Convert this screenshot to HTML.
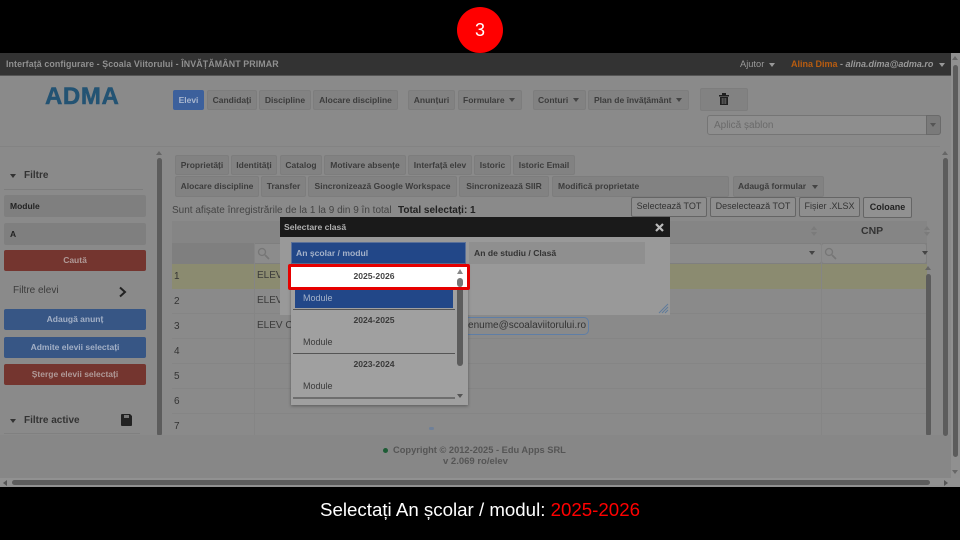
<!DOCTYPE html>
<html><head><meta charset="utf-8">
<style>
html,body{margin:0;padding:0;width:960px;height:540px;overflow:hidden;background:#000;font-family:"Liberation Sans",sans-serif}
div,span.a{position:absolute;box-sizing:border-box;white-space:nowrap}
.b{background:#828282;border-radius:2px;color:#3c3c3c;font-size:8.5px;font-weight:bold;text-align:center;border:1px solid #7d7d7d}
.t{color:#3a3a3a;font-size:10px}
.o{background:#8e8e8e;border:1px solid #656565;border-radius:2px;color:#333;font-size:9px;text-align:center;height:20px;line-height:17px}
.r{height:1px;background:#858585;left:172px;width:755px}
.n{left:174px;font-size:10px;color:#333;width:20px}
.caret{width:0;height:0;border-left:3.5px solid transparent;border-right:3.5px solid transparent;border-top:4px solid #444}
.s{background:#5c5c5c;border-radius:3px}
.side{left:4px;width:142px;border-radius:2px;text-align:center;font-size:8.5px;font-weight:bold;color:#b5b5b5;height:21px;line-height:21px}
.fi{left:4px;width:142px;height:22px;background:#7f7f7f;border-radius:2px;font-size:8.5px;font-weight:bold;color:#222;line-height:22px;padding-left:6px}
</style></head><body>
<div style="left:457px;top:7px;width:46px;height:46px;border-radius:50%;background:#f00;color:#fff;font-size:18px;line-height:46px;text-align:center">3</div>

<div style="left:0;top:53px;width:960px;height:434px;background:#8a8a8a"></div>
<div style="left:0;top:53px;width:951px;height:23px;background:#333;border-bottom:1px solid #555"></div>
<div style="left:6px;top:59px;font-size:8.85px;font-weight:bold;color:#909090;letter-spacing:.1px">Interfață configurare - Școala Viitorului - ÎNVĂȚĂMÂNT PRIMAR</div>
<div style="left:740px;top:59px;font-size:9.3px;color:#999">Ajutor</div>
<div class="caret" style="left:769px;top:63px;border-top-color:#999"></div>
<div style="left:791px;top:59px;font-size:9px;color:#999"><b style="color:#b85c10">Alina Dima</b> <b>-</b> <b><i>alina.dima@adma.ro</i></b></div>
<div class="caret" style="left:939px;top:63px;border-top-color:#999"></div>

<div style="left:45px;top:83px;font-size:24px;font-weight:bold;color:#235373;letter-spacing:.6px;-webkit-text-stroke:.5px #235373">ADMA</div>

<div class="b" style="left:173px;top:90px;width:31px;height:20px;line-height:18px;background:#3c609c;color:#a9b7cf;border-color:#3c609c">Elevi</div>
<div class="b" style="left:207px;top:90px;width:50px;height:20px;line-height:18px">Candidați</div>
<div class="b" style="left:259px;top:90px;width:52px;height:20px;line-height:18px">Discipline</div>
<div class="b" style="left:313px;top:90px;width:85px;height:20px;line-height:18px">Alocare discipline</div>
<div class="b" style="left:408px;top:90px;width:47px;height:20px;line-height:18px">Anunțuri</div>
<div class="b" style="left:458px;top:90px;width:64px;height:20px;line-height:18px;text-align:left;padding-left:4px">Formulare</div>
<div class="caret" style="left:509px;top:98px"></div>
<div class="b" style="left:533px;top:90px;width:53px;height:20px;line-height:18px;text-align:left;padding-left:4px">Conturi</div>
<div class="caret" style="left:573px;top:98px"></div>
<div class="b" style="left:588px;top:90px;width:101px;height:20px;line-height:18px;text-align:left;padding-left:5px">Plan de învățământ</div>
<div class="caret" style="left:676px;top:98px"></div>
<div class="b" style="left:700px;top:88px;width:48px;height:23px"></div>
<svg style="position:absolute;left:719px;top:93px" width="10" height="12" viewBox="0 0 10 12"><path d="M0 2h10v1.5H0zM3 0h4v2H3zM1 4h8v8H1z" fill="#1f1f1f"/><path d="M3.2 5v6M5 5v6M6.8 5v6" stroke="#777" stroke-width=".8"/></svg>

<div style="left:707px;top:115px;width:234px;height:20px;background:#8e8e8e;border:1px solid #757575;border-radius:3px;font-size:10px;color:#6a6a6a;line-height:19px;padding-left:6px">Aplică șablon</div>
<div style="left:926px;top:115px;width:15px;height:20px;background:#7a7a7a;border:1px solid #6a6a6a;border-radius:0 3px 3px 0"></div>
<div class="caret" style="left:930px;top:123px;border-top-color:#555"></div>

<div style="left:0;top:146px;width:940px;height:1px;background:#838383"></div>

<!-- Sidebar -->
<div class="caret" style="left:10px;top:174px;border-top-color:#333"></div>
<div style="left:24px;top:170px;font-size:10px;font-weight:bold;color:#333">Filtre</div>
<div style="left:4px;top:189px;width:139px;height:1px;background:#7d7d7d"></div>
<div class="fi" style="top:195px">Module</div>
<div class="fi" style="top:223px">A</div>
<div class="side" style="top:250px;background:#74352f;color:#b09a98">Caută</div>
<div style="left:13px;top:285px;font-size:10px;color:#3c3c3c">Filtre elevi</div>
<svg style="position:absolute;left:118px;top:286px" width="9" height="12" viewBox="0 0 9 12"><path d="M2 1.5l5 4.5-5 4.5" fill="none" stroke="#222" stroke-width="2"/></svg>
<div class="side" style="top:309px;background:#375685;color:#a3b0c6">Adaugă anunț</div>
<div class="side" style="top:337px;background:#375685;color:#a3b0c6">Admite elevii selectați</div>
<div class="side" style="top:364px;background:#74352f;color:#b09a98">Șterge elevii selectați</div>
<div class="caret" style="left:10px;top:419px;border-top-color:#333"></div>
<div style="left:24px;top:415px;font-size:10px;font-weight:bold;color:#333">Filtre active</div>
<svg style="position:absolute;left:121px;top:414px" width="12" height="12" viewBox="0 0 12 12"><path d="M1 0h8l2 2v9a1 1 0 0 1-1 1H1a1 1 0 0 1-1-1V1a1 1 0 0 1 1-1z" fill="#222"/><path d="M3 1h5v3H3z" fill="#777"/></svg>
<div style="left:4px;top:433px;width:136px;height:1px;background:#808080"></div>

<!-- Left scrollbar -->
<div class="caret" style="left:156px;top:151px;border-top:0;border-bottom:4px solid #666"></div>
<div class="s" style="left:157px;top:158px;width:5px;height:278px"></div>

<!-- Tabs -->
<div class="b" style="left:175px;top:155px;width:54px;height:20px;line-height:18px">Proprietăți</div>
<div class="b" style="left:231px;top:155px;width:46px;height:20px;line-height:18px">Identități</div>
<div class="b" style="left:280px;top:155px;width:42px;height:20px;line-height:18px">Catalog</div>
<div class="b" style="left:324px;top:155px;width:82px;height:20px;line-height:18px">Motivare absențe</div>
<div class="b" style="left:408px;top:155px;width:64px;height:20px;line-height:18px">Interfață elev</div>
<div class="b" style="left:474px;top:155px;width:37px;height:20px;line-height:18px">Istoric</div>
<div class="b" style="left:513px;top:155px;width:62px;height:20px;line-height:18px">Istoric Email</div>
<div class="b" style="left:175px;top:176px;width:84px;height:21px;line-height:19px">Alocare discipline</div>
<div class="b" style="left:261px;top:176px;width:45px;height:21px;line-height:19px">Transfer</div>
<div class="b" style="left:308px;top:176px;width:149px;height:21px;line-height:19px">Sincronizează Google Workspace</div>
<div class="b" style="left:459px;top:176px;width:90px;height:21px;line-height:19px">Sincronizează SIIR</div>
<div class="b" style="left:552px;top:176px;width:177px;height:21px;line-height:19px;text-align:left;padding-left:5px">Modifică proprietate</div>
<div class="b" style="left:733px;top:176px;width:91px;height:21px;line-height:19px;text-align:left;padding-left:4px">Adaugă formular</div>
<div class="caret" style="left:812px;top:185px"></div>

<div style="left:172px;top:205px;font-size:10px;color:#444">Sunt afișate înregistrările de la 1 la 9 din 9 în total</div>
<div style="left:398px;top:205px;font-size:10px;font-weight:bold;color:#222">Total selectați: 1</div>
<div class="o" style="left:631px;top:197px;width:76px">Selectează TOT</div>
<div class="o" style="left:710px;top:197px;width:86px">Deselectează TOT</div>
<div class="o" style="left:799px;top:197px;width:61px">Fișier .XLSX</div>
<div class="o" style="left:863px;top:197px;width:49px;height:21px;font-weight:bold;line-height:19px;background:#919191;color:#222">Coloane</div>

<!-- Table -->
<div style="left:172px;top:221px;width:755px;height:22px;background:#858585"></div>
<div style="left:172px;top:243px;width:755px;height:21px;background:#7f7f7f"></div>
<div style="left:254px;top:244px;width:567px;height:19px;background:#8c8c8c;border-radius:2px"></div>
<div style="left:822px;top:244px;width:104px;height:19px;background:#8c8c8c;border-radius:2px"></div>
<div style="left:172px;top:264px;width:755px;height:25px;background:#8b8b70"></div>
<div style="left:861px;top:225px;font-size:10.5px;font-weight:bold;color:#333">CNP</div>
<svg style="position:absolute;left:257px;top:247px" width="13" height="13" viewBox="0 0 13 13"><circle cx="5" cy="5" r="3.5" fill="none" stroke="#767676" stroke-width="1.3"/><path d="M8 8l4 4" stroke="#767676" stroke-width="1.6"/></svg>
<svg style="position:absolute;left:824px;top:247px" width="13" height="13" viewBox="0 0 13 13"><circle cx="5" cy="5" r="3.5" fill="none" stroke="#767676" stroke-width="1.3"/><path d="M8 8l4 4" stroke="#767676" stroke-width="1.6"/></svg>
<div class="caret" style="left:809px;top:251px"></div>
<div class="caret" style="left:922px;top:251px"></div>
<div class="caret" style="left:811px;top:226px;border-top:0;border-bottom:4px solid #7b7b7b"></div>
<div class="caret" style="left:811px;top:232px;border-top-color:#7b7b7b"></div>
<div class="caret" style="left:924px;top:226px;border-top:0;border-bottom:4px solid #7b7b7b"></div>
<div class="caret" style="left:924px;top:232px;border-top-color:#7b7b7b"></div>

<div class="r" style="top:313px"></div><div class="r" style="top:338px"></div><div class="r" style="top:363px"></div><div class="r" style="top:388px"></div><div class="r" style="top:413px"></div>
<div style="left:254px;top:221px;width:1px;height:215px;background:#858585"></div>
<div style="left:821px;top:221px;width:1px;height:215px;background:#858585"></div>

<div class="n" style="top:271px">1</div><div class="n" style="top:296px">2</div><div class="n" style="top:321px">3</div><div class="n" style="top:346px">4</div><div class="n" style="top:371px">5</div><div class="n" style="top:396px">6</div><div class="n" style="top:421px">7</div>
<div class="t" style="left:257px;top:270px">ELEV</div><div class="t" style="left:257px;top:295px">ELEV</div><div class="t" style="left:257px;top:320px">ELEV C</div>
<div style="left:440px;top:317px;width:149px;height:18px;border:1px solid #5f7ea6;border-radius:5px;font-size:10px;color:#333;line-height:16px;text-align:right;padding-right:2px">prenume@scoalaviitorului.ro</div>
<div style="left:429px;top:427px;width:5px;height:3px;background:#6f8098;border-radius:2px"></div>

<!-- Inner right scrollbar -->
<div class="caret" style="left:925px;top:266px;border-top:0;border-bottom:4px solid #666"></div>
<div class="s" style="left:926px;top:274px;width:5px;height:162px"></div>

<!-- Footer -->
<div style="left:0;top:435px;width:951px;height:43px;background:#878787"></div>
<div style="left:383px;top:448px;width:5px;height:5px;border-radius:50%;background:#1d5c35"></div>
<div style="left:393px;top:445px;font-size:9.3px;font-weight:bold;color:#555">Copyright © 2012-2025 - Edu Apps SRL</div>
<div style="left:443px;top:456px;font-size:9.5px;font-weight:bold;color:#555">v 2.069 ro/elev</div>

<!-- Right scrollbars -->
<div class="caret" style="left:942px;top:151px;border-top:0;border-bottom:4px solid #666"></div>
<div class="s" style="left:943px;top:158px;width:5px;height:278px"></div>
<div style="left:951px;top:53px;width:9px;height:425px;background:#909090"></div>
<div class="caret" style="left:952px;top:56px;border-top:0;border-bottom:4px solid #666"></div>
<div class="s" style="left:953px;top:65px;width:5px;height:392px"></div>
<div class="caret" style="left:952px;top:470px;border-top-color:#666"></div>

<!-- Horizontal scrollbar -->
<div style="left:0;top:478px;width:960px;height:9px;background:#919191"></div>
<div class="s" style="left:12px;top:480px;width:918px;height:5px"></div>
<div style="left:3px;top:480px;width:0;height:0;border-top:3px solid transparent;border-bottom:3px solid transparent;border-right:4px solid #555"></div>
<div style="left:944px;top:480px;width:0;height:0;border-top:3px solid transparent;border-bottom:3px solid transparent;border-left:4px solid #555"></div>

<!-- Dialog -->
<div style="left:280px;top:217px;width:390px;height:98px;background:#999"></div>
<div style="left:280px;top:217px;width:390px;height:20px;background:#1a1a1a"></div>
<div style="left:284px;top:222px;font-size:8.6px;font-weight:bold;color:#b0b0b0">Selectare clasă</div>
<svg style="position:absolute;left:655px;top:223px" width="9" height="9" viewBox="0 0 9 9"><path d="M1 1l7 7M8 1L1 8" stroke="#bbb" stroke-width="2.2"/></svg>
<div style="left:469px;top:242px;width:176px;height:22px;background:#8f8f8f;font-size:8.6px;font-weight:bold;color:#333;line-height:22px;padding-left:5px">An de studiu / Clasă</div>
<svg style="position:absolute;left:658px;top:303px" width="11" height="11" viewBox="0 0 11 11"><path d="M1 10L10 1M4 10l6-6M7 10l3-3" stroke="#5f7b9b" stroke-width="1"/></svg>

<div style="left:291px;top:242px;width:175px;height:22px;background:#224788;border:1px solid #5a7099;font-size:8.6px;font-weight:bold;color:#a5b2c9;line-height:20px;padding-left:4px">An școlar / modul</div>
<div style="left:291px;top:264px;width:177px;height:141px;background:#a0a0a0;box-shadow:0 1px 3px rgba(0,0,0,.35)"></div>
<div style="left:295px;top:289px;width:158px;height:19px;background:#224788;font-size:9px;color:#a5b2c9;line-height:19px;padding-left:8px">Module</div>
<div style="left:293px;top:309px;width:162px;height:1px;background:#555"></div>
<div style="left:293px;top:315px;width:162px;text-align:center;font-size:8.6px;font-weight:bold;color:#3a3a3a">2024-2025</div>
<div style="left:303px;top:337px;font-size:9px;color:#3a3a3a">Module</div>
<div style="left:293px;top:353px;width:162px;height:1px;background:#555"></div>
<div style="left:293px;top:359px;width:162px;text-align:center;font-size:8.6px;font-weight:bold;color:#3a3a3a">2023-2024</div>
<div style="left:303px;top:381px;font-size:9px;color:#3a3a3a">Module</div>
<div style="left:293px;top:397px;width:162px;height:2px;background:#6e6e6e"></div>
<div class="s" style="left:457px;top:277px;width:6px;height:89px"></div>
<div class="caret" style="left:457px;top:394px;border-top-color:#555"></div>

<div style="left:288px;top:264px;width:182px;height:26px;background:#fff;border:3px solid #e60000;border-radius:2px"></div>
<div style="left:291px;top:271px;width:166px;text-align:center;font-size:8.6px;font-weight:bold;color:#444">2025-2026</div>
<div class="caret" style="left:457px;top:269px;border-top:0;border-bottom:5px solid #888"></div>
<div class="s" style="left:457px;top:278px;width:6px;height:9px;background:#777"></div>

<!-- Caption -->
<div style="left:0;top:499px;width:960px;text-align:center;font-size:18.7px;color:#fff">Selectați An școlar / modul: <span style="color:#f00">2025-2026</span></div>
</body></html>
